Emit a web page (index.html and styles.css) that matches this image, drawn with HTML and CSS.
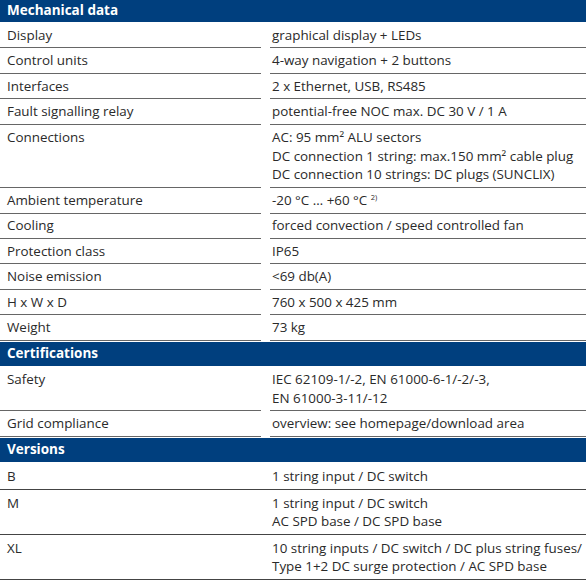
FILE: index.html
```html
<!DOCTYPE html>
<html>
<head>
<meta charset="utf-8">
<link rel="stylesheet" href="styles.css">
</head>
<body>
<div class="sheet">
  <div class="head first">Mechanical data</div>
  <div class="row"><div class="k">Display</div><div class="v">graphical display + LEDs</div></div>
  <div class="row"><div class="k">Control units</div><div class="v">4-way navigation + 2 buttons</div></div>
  <div class="row"><div class="k">Interfaces</div><div class="v">2 x Ethernet, USB, RS485</div></div>
  <div class="row"><div class="k">Fault signalling relay</div><div class="v">potential-free NOC max. DC 30 V / 1 A</div></div>
  <div class="row"><div class="k">Connections</div><div class="v">AC: 95 mm² ALU sectors<br>DC connection 1 string: max.150 mm² cable plug<br>DC connection 10 strings: DC plugs (SUNCLIX)</div></div>
  <div class="row"><div class="k">Ambient temperature</div><div class="v">-20 °C … +60 °C <sup>2)</sup></div></div>
  <div class="row"><div class="k">Cooling</div><div class="v">forced convection / speed controlled fan</div></div>
  <div class="row"><div class="k">Protection class</div><div class="v">IP65</div></div>
  <div class="row"><div class="k">Noise emission</div><div class="v">&lt;69 db(A)</div></div>
  <div class="row"><div class="k">H x W x D</div><div class="v">760 x 500 x 425 mm</div></div>
  <div class="row"><div class="k">Weight</div><div class="v">73 kg</div></div>
  <div class="head">Certifications</div>
  <div class="row"><div class="k">Safety</div><div class="v">IEC 62109-1/-2, EN 61000-6-1/-2/-3,<br>EN 61000-3-11/-12</div></div>
  <div class="row"><div class="k">Grid compliance</div><div class="v">overview: see homepage/download area</div></div>
  <div class="head">Versions</div>
  <div class="row full"><div class="k">B</div><div class="v">1 string input / DC switch</div></div>
  <div class="row full"><div class="k">M</div><div class="v">1 string input / DC switch<br>AC SPD base / DC SPD base</div></div>
  <div class="row full"><div class="k">XL</div><div class="v">10 string inputs / DC switch / DC plus string fuses/<br>Type 1+2 DC surge protection / AC SPD base</div></div>
</div>
</body>
</html>
```
FILE: styles.css
```css
html, body {
  margin: 0;
  padding: 0;
  background: #ffffff;
}
.sheet {
  width: 586px;
  font-family: "Open Sans", "Liberation Sans", sans-serif;
  font-size: 13.4px;
  color: #2a2a2a;
}
.head {
  background: #003f7e;
  color: #ffffff;
  font-weight: bold;
  font-size: 13.5px;
  height: 24px;
  line-height: 23px;
  padding-left: 7px;
  margin-top: 1px;
  margin-bottom: 1px;
}
.head.first {
  margin-top: 0;
  height: 22px;
  line-height: 21px;
}
.row {
  display: grid;
  grid-template-columns: 261px 1fr;
  column-gap: 9px;
}
.k, .v {
  line-height: 18.8px;
  padding: 2.9px 0 2.8px 0;
  border-bottom: 1px solid #666666;
}
.k {
  padding-left: 7px;
}
.v {
  padding-left: 2px;
}
.v sup {
  font-size: 7.5px;
  vertical-align: 5px;
  line-height: 0;
}
.row.full {
  column-gap: 0;
  grid-template-columns: 270px 1fr;
  border-bottom: 1px solid #444444;
}
.row.full .k, .row.full .v {
  border-bottom: none;
  line-height: 18px;
  padding-top: 4px;
  padding-bottom: 4px;
}
```
